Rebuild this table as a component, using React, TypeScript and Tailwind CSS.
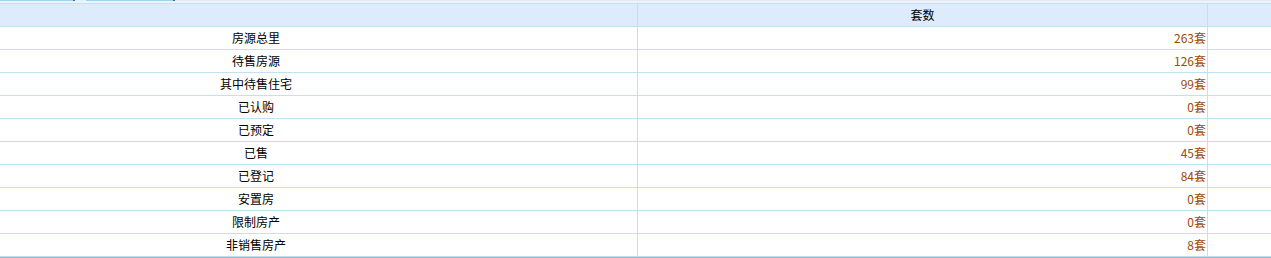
import React from "react";

const rows: [string, string][] = [
  ["房源总里", "263套"],
  ["待售房源", "126套"],
  ["其中待售住宅", "99套"],
  ["已认购", "0套"],
  ["已预定", "0套"],
  ["已售", "45套"],
  ["已登记", "84套"],
  ["安置房", "0套"],
  ["限制房产", "0套"],
  ["非销售房产", "8套"],
];

export default function App() {
  return (
    <div
      className="w-[1271px] h-[258px] bg-white text-[12px] text-black overflow-hidden"
      style={{ fontFamily: '"Noto Sans CJK SC", "Liberation Sans", sans-serif' }}
    >
      {/* top tab strip */}
      <div className="flex h-[1px]">
        <div className="w-[73px] bg-[#9fd3ef]" />
        <div className="w-[2px] bg-[#5a6470]" />
        <div className="w-[11px] bg-[#e8eefa]" />
        <div className="w-[87px] bg-[#9fd3ef]" />
        <div className="w-[2px] bg-[#5a6470]" />
        <div className="flex-1 bg-[#e6e8f4]" />
      </div>
      <div className="h-[2px] bg-[#eef2fa]" />
      <div className="h-[1px] bg-[#c3e3f1]" />
      {/* header */}
      <div className="grid grid-cols-[637px_1px_569px_1px_63px] h-[23px] bg-[#deebfc] border-b border-[#bfe1f0]">
        <div />
        <div className="bg-[#bfe1f0]" />
        <div className="flex items-center justify-center leading-none">套数</div>
        <div className="bg-[#bfe1f0]" />
        <div />
      </div>
      {rows.map(([label, val]) => (
        <div
          key={label}
          className="grid grid-cols-[637px_1px_569px_1px_63px] h-[23px] border-b border-[#bfe1f0]"
        >
          <div className="flex items-center justify-center pr-[125px] leading-none">{label}</div>
          <div className="bg-[#bfe1f0]" />
          <div className="flex items-center justify-end pr-[1px] leading-none text-[#994a10]">{val}</div>
          <div className="bg-[#bfe1f0]" />
          <div />
        </div>
      ))}
      <div className="h-[1px] bg-[#9ab3c4]" />
    </div>
  );
}
